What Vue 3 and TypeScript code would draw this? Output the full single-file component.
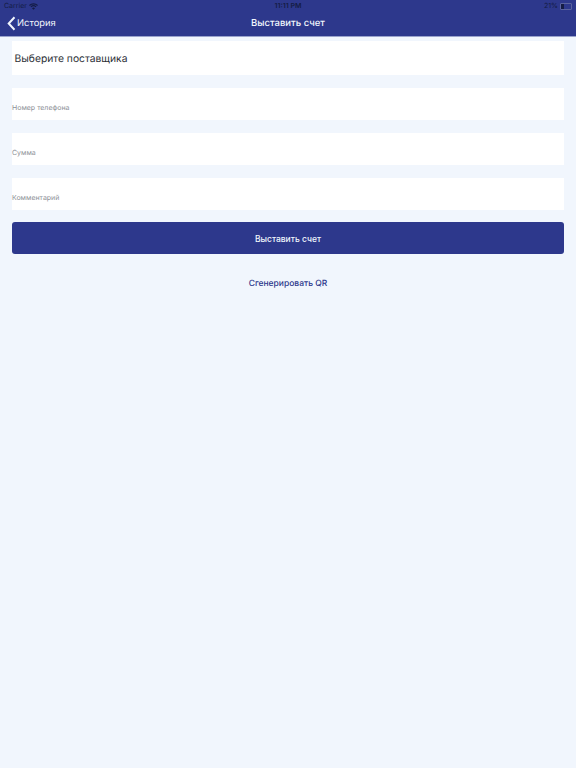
<script setup lang="ts">
const fields: string[] = ['Номер телефона', 'Сумма', 'Комментарий']
</script>

<template>
  <div class="page">
    <header class="top">
      <div class="status">
        <div class="status-left">
          <span>Carrier</span>
          <svg class="wifi" viewBox="0 0 16 12" width="9" height="7">
            <path d="M0.8 4.2 A10.4 10.4 0 0 1 15.2 4.2" fill="none" stroke="#141c44" stroke-width="2" />
            <path d="M3.4 6.8 A6.6 6.6 0 0 1 12.6 6.8" fill="none" stroke="#141c44" stroke-width="2" />
            <path d="M8 11.8 L5.3 9 A3.8 3.8 0 0 1 10.7 9 Z" fill="#141c44" />
          </svg>
        </div>
        <span class="status-time">11:11 PM</span>
        <div class="status-right">
          <span>21%</span>
          <span class="battery"><span class="battery-fill"></span></span>
        </div>
      </div>
      <nav class="nav">
        <div class="back">
          <svg class="chevron" viewBox="0 0 9 15" width="9" height="15">
            <path d="M7.5 1.2 L1.7 7.5 L7.5 13.8" fill="none" stroke="#f1f6fd" stroke-width="2" />
          </svg>
          <span>История</span>
        </div>
        <h1 class="title">Выставить счет</h1>
      </nav>
    </header>
    <main class="content">
      <div class="supplier">Выберите поставщика</div>
      <div v-for="f in fields" :key="f" class="field">{{ f }}</div>
      <button class="submit" type="button">Выставить счет</button>
      <a class="qr">Сгенерировать QR</a>
    </main>
  </div>
</template>

<style>
html, body { margin: 0; background: #f1f6fd; }
</style>

<style scoped>
.page {
  width: 576px;
  height: 768px;
  overflow: hidden;
  background: #f1f6fd;
  font-family: Inter, "Noto Sans", sans-serif;
  text-rendering: geometricPrecision;
}
.top {
  height: 36px;
  background: #2d388c;
  border-bottom: 1px solid #9aa3cc;
  display: flex;
  flex-direction: column;
}
.status {
  height: 10px;
  padding: 1px 4px 0 4px;
  display: grid;
  grid-template-columns: 1fr auto 1fr;
  align-items: center;
  font-size: 7px;
  line-height: 10px;
  color: #141c44;
}
.status-left { display: flex; align-items: center; gap: 2px; }
.status-time { font-weight: 600; }
.status-right { display: flex; justify-content: flex-end; align-items: center; gap: 2px; }
.battery {
  width: 10px;
  height: 5px;
  border: 0.5px solid #5a639f;
  border-radius: 1px;
  display: block;
}
.battery-fill { display: block; width: 3px; height: 5px; background: #141c44; }
.nav {
  flex: 1;
  position: relative;
  display: flex;
  align-items: center;
  justify-content: center;
  color: #f1f6fd;
}
.back {
  position: absolute;
  left: 7px;
  top: 0;
  bottom: 0;
  display: flex;
  align-items: center;
  gap: 1px;
  font-size: 9.4px;
}
.title {
  margin: 0;
  font-size: 9.5px;
  font-weight: 500;
}
.content {
  padding: 4px 12px 0;
  display: flex;
  flex-direction: column;
}
.supplier {
  height: 34px;
  background: #fff;
  display: flex;
  align-items: center;
  padding: 2px 0 0 2.5px;
  box-sizing: border-box;
  font-size: 10.3px;
  color: #2c2f36;
  margin-bottom: 13px;
}
.field {
  height: 32px;
  background: #fff;
  margin-bottom: 13px;
  font-size: 7px;
  line-height: 10px;
  color: #8c8f96;
  padding-top: 15px;
  box-sizing: border-box;
}
.field:nth-of-type(4) { margin-bottom: 12px; }
.submit {
  height: 32px;
  border: none;
  border-radius: 3px;
  background: #2d388c;
  color: #f1f6fd;
  font: 500 8.5px Inter, "Noto Sans", sans-serif;
  padding: 1px 0 0;
}
.qr {
  margin-top: 24px;
  text-align: center;
  font-size: 8.5px;
  line-height: 12px;
  font-weight: 500;
  color: #2d388c;
}
</style>
